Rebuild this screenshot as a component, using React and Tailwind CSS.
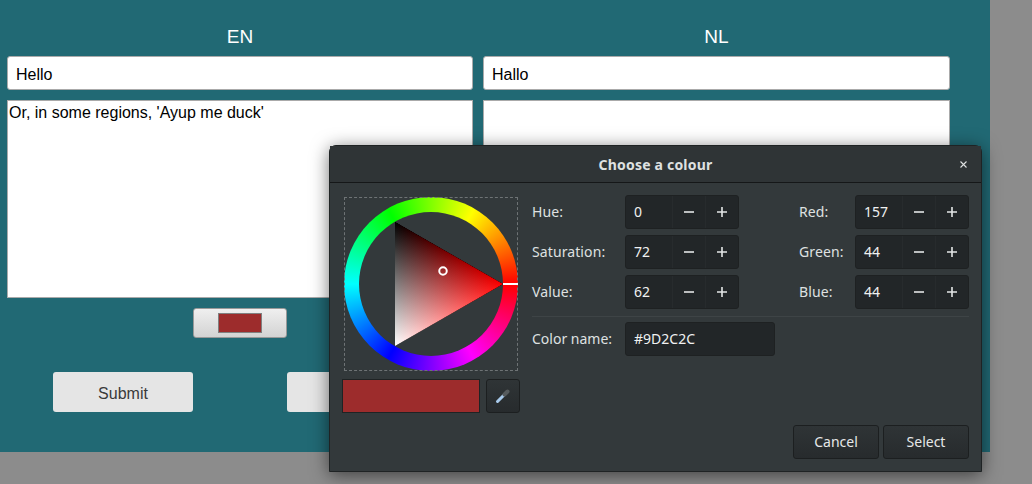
import React from 'react';

const Minus = () => (
  <svg width="10" height="10" viewBox="0 0 10 10"><path d="M0 5h10" stroke="#e4e6e6" strokeWidth="1.6" /></svg>
);

const Plus = () => (
  <svg width="10" height="10" viewBox="0 0 10 10"><path d="M0 5h10M5 0v10" stroke="#e4e6e6" strokeWidth="1.6" /></svg>
);

const Spin = ({ label, value, labelWidth }) => (
  <div className="flex items-center">
    <span className={`${labelWidth} pb-[2px] tracking-[0.1px] text-[#dfe1e1]`}>{label}</span>
    <div className="flex h-[34px] w-[114px] rounded-[3px] border border-[#1e2122] bg-[#222628] text-[#f0f1f1]">
      <span className="flex w-[46px] items-center pb-[2px] pl-2">{value}</span>
      <span className="flex w-[33px] items-center justify-center border-l border-[#272b2d]"><Minus /></span>
      <span className="flex flex-1 items-center justify-center border-l border-[#272b2d]"><Plus /></span>
    </div>
  </div>
);

const Wheel = () => (
  <div className="relative h-[174px] w-[174px] outline-1 -outline-offset-1 outline-dashed outline-[#6e7375]">
    <div className="flex h-full w-full items-center justify-center rounded-full bg-[conic-gradient(from_90deg,#ff0000,#ff00ff,#0000ff,#00ffff,#00ff00,#ffff00,#ff0000)]">
      <div className="h-[144px] w-[144px] rounded-full bg-[#33393b]" />
    </div>
    <svg className="absolute inset-0" width="174" height="174" viewBox="0 0 174 174">
      <defs>
        {/* red and white weights add up, which gives the HSV triangle */}
        <linearGradient id="white" gradientUnits="userSpaceOnUse" x1="104.8" y1="56.17" x2="51" y2="149">
          <stop offset="0" stopColor="#000" />
          <stop offset="1" stopColor="#fff" />
        </linearGradient>
        <linearGradient id="hue" gradientUnits="userSpaceOnUse" x1="51" y1="0" x2="159" y2="0">
          <stop offset="0" stopColor="#000" />
          <stop offset="1" stopColor="#f00" />
        </linearGradient>
      </defs>
      <g className="isolate">
        <polygon points="159,87 51,25 51,149" fill="url(#hue)" />
        <polygon className="mix-blend-plus-lighter" points="159,87 51,25 51,149" fill="url(#white)" />
      </g>
      <circle cx="99" cy="74" r="3.75" fill="none" stroke="#fff" strokeWidth="2" />
      <rect x="159" y="86" width="15" height="2" fill="#fff" />
    </svg>
  </div>
);

const Dropper = () => (
  <svg width="16" height="16" viewBox="0 0 16 16">
    <path d="M2.5 13.5L8.5 7.5" stroke="#a9cbec" strokeWidth="3" strokeLinecap="round" />
    <path d="M9.5 6.5L12.5 3.5" stroke="#565b5d" strokeWidth="4" strokeLinecap="round" />
  </svg>
);

const DarkButton = ({ children }) => (
  <button className="flex h-[34px] w-[86px] items-center justify-center rounded-[3px] border border-[#1c1f20] bg-gradient-to-b from-[#2f3436] to-[#272b2d] pb-[2px] text-[#e6e8e8]">
    {children}
  </button>
);

export default function App() {
  return (
    <div className="relative h-[484px] w-[1032px] overflow-hidden bg-[#8c8c8c] font-['Liberation_Sans',sans-serif]">
      {/* Form behind the dialog */}
      <div className="h-[452px] w-[990px] bg-[#216974] px-[7px]">
        <div className="grid w-[943px] grid-cols-[466px_467px] gap-x-[10px] pt-[24px]">
          <div className="flex h-[32px] items-start justify-center pt-px text-[19px] leading-[24px] text-white">EN</div>
          <div className="flex h-[32px] items-start justify-center pt-px text-[19px] leading-[24px] text-white">NL</div>
          <input readOnly value="Hello" className="h-[34px] rounded-[3px] border border-[#aaaaaa] bg-white px-2 pt-1 text-[16px] text-black" />
          <input readOnly value="Hallo" className="h-[34px] rounded-[3px] border border-[#aaaaaa] bg-white px-2 pt-1 text-[16px] text-black" />
          <textarea readOnly value="Or, in some regions, 'Ayup me duck'" className="mt-[10px] h-[198px] resize-none border border-[#aaaaaa] bg-white px-px pt-[2px] text-[16px] leading-[20px] text-black" />
          <textarea readOnly value="" className="mt-[10px] h-[198px] resize-none border border-[#aaaaaa] bg-white px-px pt-[2px] text-[16px] leading-[20px] text-black" />
          <div className="flex flex-col items-center">
            <div className="mt-[10px] flex h-[30px] w-[94px] items-center justify-center rounded-[3px] border border-[#999999] bg-gradient-to-b from-[#efefef] to-[#d3d3d3]">
              <div className="h-[20px] w-[44px] border border-[#808080] bg-[#9d2c2c]" />
            </div>
            <div className="mt-[34px] flex gap-[94px]">
              <button className="h-[40px] w-[140px] rounded-[3px] bg-[#e5e5e5] pt-[3px] text-[16px] text-[#3a3a3a]">Submit</button>
              <button className="h-[40px] w-[140px] rounded-[3px] bg-[#e5e5e5] pt-[3px] text-[16px] text-[#3a3a3a]">Cancel</button>
            </div>
          </div>
        </div>
      </div>

      {/* Colour chooser dialog */}
      <div className="absolute left-[329px] top-[145px] h-[327px] w-[653px] rounded-t-[7px] border border-[#1f2324] bg-[#33393b] font-['Noto_Sans',sans-serif] text-[14px] shadow-[0_3px_18px_rgba(0,0,0,0.55)]">
        <div className="relative flex h-[37px] items-center justify-center border-b border-[#151718] bg-[#2f3436]">
          <span className="font-bold tracking-[0.2px] text-[#dfe1e1]">Choose a colour</span>
          <svg className="absolute right-[14px] top-[15px]" width="7" height="7" viewBox="0 0 7 7">
            <path d="M0.5 0.5l6 6M6.5 0.5l-6 6" stroke="#dfe1e1" strokeWidth="1.1" />
          </svg>
        </div>
        <div className="flex pl-[12px] pr-[12px] pt-[12px]">
          <div className="flex w-[178px] flex-col pt-[2px]">
            <div className="pl-[2px]"><Wheel /></div>
            <div className="mt-[8px] flex justify-between">
              <div className="h-[34px] w-[138px] border border-[#1f2324] bg-[#9d2c2c]" />
              <button className="flex h-[34px] w-[34px] items-center justify-center rounded-[3px] border border-[#1c1f20] bg-gradient-to-b from-[#2f3436] to-[#272b2d]"><Dropper /></button>
            </div>
          </div>
          <div className="ml-[12px] flex flex-1 flex-col">
            <div className="grid grid-cols-[207px_170px] justify-between gap-y-[6px]">
              <Spin label="Hue:" value="0" labelWidth="w-[93px]" />
              <Spin label="Red:" value="157" labelWidth="w-[56px]" />
              <Spin label="Saturation:" value="72" labelWidth="w-[93px]" />
              <Spin label="Green:" value="44" labelWidth="w-[56px]" />
              <Spin label="Value:" value="62" labelWidth="w-[93px]" />
              <Spin label="Blue:" value="44" labelWidth="w-[56px]" />
            </div>
            <div className="mt-[7px] border-t border-[#3e4446]" />
            <div className="mt-[5px] flex items-center">
              <span className="w-[93px] pb-[2px] text-[#dfe1e1]">Color name:</span>
              <div className="flex h-[34px] w-[150px] items-center rounded-[3px] border border-[#1e2122] bg-[#222628] pb-[2px] pl-2 text-[#f0f1f1]">#9D2C2C</div>
            </div>
            <div className="mt-[69px] flex justify-end gap-[4px]">
              <DarkButton>Cancel</DarkButton>
              <DarkButton>Select</DarkButton>
            </div>
          </div>
        </div>
      </div>
    </div>
  );
}
